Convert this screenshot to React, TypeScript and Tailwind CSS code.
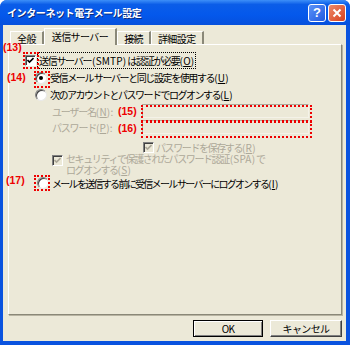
import React from "react";

const jp = { fontFamily: '"Noto Sans CJK JP", "Noto Sans", sans-serif' };

function Check({ disabled }: { disabled?: boolean }) {
  return (
    <span
      className={
        "flex h-[11px] w-[11px] shrink-0 items-center justify-center border border-t-[#808080] border-l-[#808080] border-r-white border-b-white shadow-[inset_1px_1px_0_#404040] " +
        (disabled ? "bg-[#ece9d8]" : "bg-white")
      }
    >
      <svg width="7" height="7" viewBox="0 0 7 7">
        <path
          d="M0.5 3 L2.5 5 L6.5 1"
          fill="none"
          stroke={disabled ? "#aca899" : "#000"}
          strokeWidth="1.6"
        />
      </svg>
    </span>
  );
}

function Radio({ on }: { on?: boolean }) {
  return (
    <span className="flex h-[12px] w-[12px] shrink-0 items-center justify-center rounded-full border border-t-[#808080] border-l-[#808080] border-r-[#e8e8e8] border-b-[#e8e8e8] bg-white shadow-[inset_1px_1px_0_#404040]">
      {on && <span className="h-[4px] w-[4px] rounded-full bg-black" />}
    </span>
  );
}

function Key({ k }: { k: string }) {
  return (
    <span className="tracking-[0.2px]">
      (<span className="underline">{k}</span>)
    </span>
  );
}

function Lat({ t }: { t: string }) {
  return <span className="tracking-[0.2px]">{t}</span>;
}

function Tab({ label, active }: { label: string; active?: boolean }) {
  return (
    <div
      className={
        "flex items-center justify-center whitespace-nowrap border-l border-t border-r-2 border-l-white border-t-white border-r-[#8a8878] bg-[#ece9d8] " +
        (active ? "relative z-10 -mb-px h-[17px] px-[7px] pb-[2px]" : "h-[13px] px-[6px]")
      }
    >
      {label}
    </div>
  );
}

function Note({ n, className }: { n: string; className: string }) {
  return (
    <span
      className={"absolute text-[10.5px] font-bold leading-[11px] tracking-normal text-[#ee0000] " + className}
      style={{ fontFamily: '"Liberation Sans", sans-serif' }}
    >
      ({n})
    </span>
  );
}

function Box({ className }: { className: string }) {
  return <span className={"pointer-events-none absolute border-2 border-dotted border-[#ee0000] " + className} />;
}

export default function App() {
  return (
    <div
      className="flex h-[345px] w-[350px] flex-col overflow-hidden rounded-t-[7px] bg-[#0a53df] text-[10px] tracking-[-1.4px] text-black"
      style={jp}
    >
      {/* title bar */}
      <div className="flex h-[25px] shrink-0 items-center bg-[linear-gradient(to_bottom,#3d8ff8_0%,#0b5de8_18%,#0458ec_60%,#0650dc_100%)] pl-[7px] pr-[4px]">
        <span className="text-[10px] font-bold tracking-[-0.4px] text-white [text-shadow:1px_1px_0_#0a2a7a]">
          インターネット電子メール設定
        </span>
        <div className="ml-auto flex gap-[2px]">
          <div className="flex h-[18px] w-[18px] items-center justify-center rounded-[3px] border border-white bg-[linear-gradient(135deg,#5b93f8,#2159e0)] text-[13px] font-bold leading-none tracking-normal text-white" style={{ fontFamily: '"Liberation Sans", sans-serif' }}>
            ?
          </div>
          <div className="flex h-[18px] w-[18px] items-center justify-center rounded-[3px] border border-white bg-[linear-gradient(135deg,#ee8a6a,#d7401e)]">
            <svg width="10" height="10" viewBox="0 0 10 10">
              <path d="M1.5 1.5 L8.5 8.5 M8.5 1.5 L1.5 8.5" stroke="#fff" strokeWidth="2" />
            </svg>
          </div>
        </div>
      </div>

      {/* body */}
      <div className="mb-[4px] ml-[3px] mr-[4px] flex flex-1 flex-col bg-[#ece9d8]">
        <div className="flex h-[19px] shrink-0 items-end pl-[7px] tracking-[-0.6px]">
          <Tab label="全般" />
          <Tab label="送信サーバー" active />
          <Tab label="接続" />
          <Tab label="詳細設定" />
        </div>

        <div className="relative ml-[5px] mr-[4px] h-[271px] border-l border-t border-l-white border-t-white border-b border-r border-b-[#8a8878] border-r-[#8a8878] shadow-[1px_1px_0_#b8b4a2]">
          <div className="h-[7px]" />
          <div className="flex h-[17px] items-center whitespace-nowrap pl-[16px]">
            <Check />
            <span className="ml-[2px] px-[1px] tracking-[-1.3px] outline-1 outline-dotted outline-black">
              送信サーバー <Lat t="(SMTP)" /> は認証が必要<Key k="O" />
            </span>
          </div>
          <div className="flex h-[17px] items-center whitespace-nowrap pl-[26px]">
            <Radio on />
            <span className="ml-[3px] tracking-[-1.4px]">
              受信メール サーバーと同じ設定を使用する<Key k="U" />
            </span>
          </div>
          <div className="flex h-[17px] items-center whitespace-nowrap pl-[26px]">
            <Radio />
            <span className="ml-[3px] tracking-[-1.5px]">
              次のアカウントとパスワードでログオンする<Key k="L" />
            </span>
          </div>
          <div className="flex h-[16px] items-center whitespace-nowrap pl-[43px] text-[#aca899]">
            <span className="w-[90px] tracking-[-1.2px]">
              ユーザー名<Key k="N" />:
            </span>
            <span className="h-[14px] w-[167px] border border-t-[#aca899] border-l-[#aca899] border-r-[#f4f2e8] border-b-[#f4f2e8] bg-[#ece9d8]" />
          </div>
          <div className="flex h-[16px] items-center whitespace-nowrap pl-[43px] text-[#aca899]">
            <span className="w-[90px] tracking-[-1.2px]">
              パスワード<Key k="P" />:
            </span>
            <span className="h-[14px] w-[167px] border border-t-[#aca899] border-l-[#aca899] border-r-[#f4f2e8] border-b-[#f4f2e8] bg-[#ece9d8]" />
          </div>
          <div className="mt-[4px] flex h-[16px] items-center whitespace-nowrap pl-[134px] text-[#aca899]">
            <Check disabled />
            <span className="ml-[2px]">
              パスワードを保存する<Key k="R" />
            </span>
          </div>
          <div className="flex h-[20px] items-start whitespace-nowrap pl-[43px] text-[#aca899]">
            <Check disabled />
            <span className="ml-[3px] -mt-[2px] flex flex-col leading-[12px]">
              <span>
                セキュリティで保護されたパスワード認証 <Lat t="(SPA)" /> で
              </span>
              <span className="-mt-[1px]">
                ログオンする<Key k="S" />
              </span>
            </span>
          </div>
          <div className="flex h-[16px] items-center whitespace-nowrap pl-[28px]">
            <Radio />
            <span className="ml-[3px] tracking-[-1.7px]">
              メールを送信する前に受信メール サーバーにログオンする<Key k="I" />
            </span>
          </div>

          <Note n="13" className="-left-[6px] -top-[3px]" />
          <Note n="14" className="-left-[2px] top-[27px]" />
          <Note n="15" className="left-[109px] top-[61px]" />
          <Note n="16" className="left-[109px] top-[78px]" />
          <Note n="17" className="-left-[3px] top-[130px]" />
          <Box className="left-[14px] top-[7px] h-[17px] w-[16px]" />
          <Box className="left-[25px] top-[26px] h-[17px] w-[16px]" />
          <Box className="left-[132px] top-[60px] h-[17px] w-[171px]" />
          <Box className="left-[132px] top-[76px] h-[17px] w-[171px]" />
          <Box className="left-[25px] top-[130px] h-[16px] w-[16px]" />
        </div>

        <div className="mt-[5px] flex h-[17px] justify-end gap-[7px] pr-[4px] tracking-[-0.6px]">
          <button className="flex w-[70px] items-center justify-center border border-black bg-[#ece9d8] shadow-[inset_1px_1px_0_#fff,inset_-1px_-1px_0_#808080]">
            OK
          </button>
          <button className="flex w-[72px] items-center justify-center border border-t-white border-l-white border-r-[#404040] border-b-[#404040] bg-[#ece9d8] shadow-[inset_-1px_-1px_0_#808080]">
            キャンセル
          </button>
        </div>
      </div>
    </div>
  );
}
